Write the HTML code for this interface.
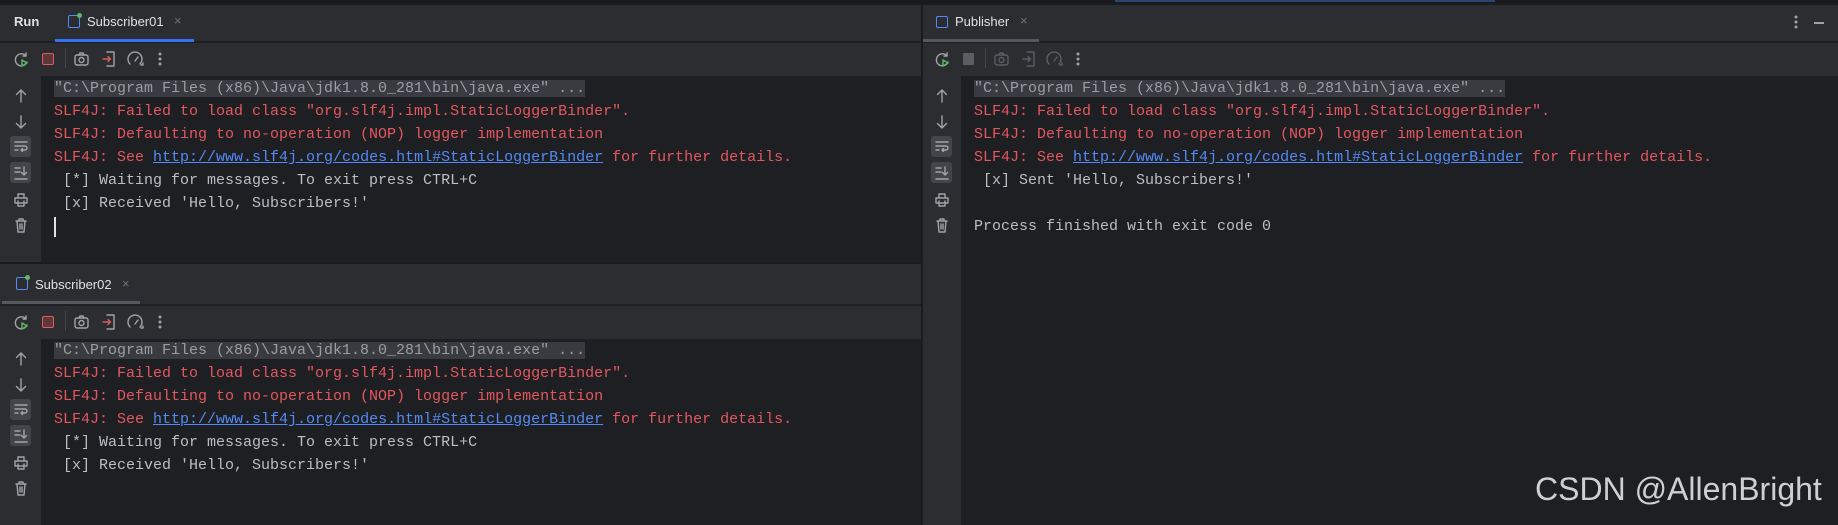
<!DOCTYPE html>
<html><head><meta charset="utf-8"><style>
*{margin:0;padding:0;box-sizing:border-box}
body{width:1838px;height:525px;background:#1e1f22;position:relative;overflow:hidden;font-family:"Liberation Sans",sans-serif}
.a{position:absolute}
.bar{background:#2b2d30}
.mono{font-family:"Liberation Mono",monospace;font-size:15px;white-space:pre;color:#bcbec4;position:absolute;line-height:23px}
.r{color:#e5575f}.l{color:#548af7;text-decoration:underline}.g{background:#393b40;color:#9a9da3}
.tab{position:absolute;font-size:13px;color:#dfe1e5}
svg{position:absolute;overflow:visible}
svg *{fill:none;stroke:#a0a3a8;stroke-width:1.4;stroke-linecap:round;stroke-linejoin:round}
svg.d *{stroke:#5a5d63}
</style></head><body>
<div class="a" style="left:0;top:0;width:1838px;height:5px;background:#1a1b1e"></div>
<div class="a" style="left:1115px;top:0;width:380px;height:2px;background:#2e436e"></div>

<!-- left top panel -->
<div class="a bar" style="left:0;top:5px;width:921px;height:36px"></div>
<div class="tab" style="left:14px;top:14px;font-weight:bold">Run</div>
<div class="a" style="left:68px;top:15px;width:12px;height:13px;border:1.5px solid #548af7;border-radius:2px"></div>
<div class="a" style="left:77px;top:13px;width:5px;height:5px;background:#5fb865;border-radius:50%"></div>
<div class="tab" style="left:87px;top:14px">Subscriber01</div>
<div class="tab" style="left:174px;top:13px;color:#6f737a">×</div>
<div class="a" style="left:55px;top:39px;width:139px;height:3px;background:#3574f0"></div>
<div class="a bar" style="left:0;top:43px;width:921px;height:33px"></div>
<div class="a bar" style="left:0;top:76px;width:41px;height:186px"></div>

<!-- toolbar template positions via SVG -->
<svg style="left:14px;top:52px" width="16" height="16"><path d="M12 4 A6 6 0 1 0 13 10"/><path d="M12 1 V4 H9"/><path d="M8 8 L13 11 L8 14Z" style="stroke:#5fb865"/></svg>
<div class="a" style="left:42px;top:53px;width:12px;height:12px;border:1.5px solid #db5c5c;background:#5e3838;border-radius:2px"></div>
<div class="a" style="left:65px;top:48px;width:1px;height:20px;background:#43454a"></div>
<svg style="left:74px;top:52px" width="16" height="14"><rect x="1" y="3" width="13" height="10" rx="2"/><circle cx="7.5" cy="8" r="2.5"/><path d="M5 3 L6 1 H9 L10 3"/></svg>
<svg style="left:102px;top:51px" width="14" height="16"><path d="M5 1 H12 V15 H5"/><path d="M1 8 H8 M6 5.5 L8.5 8 L6 10.5" style="stroke:#db5c5c"/></svg>
<svg style="left:127px;top:51px" width="18" height="16"><path d="M3 13 A7 7 0 1 1 13 13"/><path d="M8 10 L11 6"/><path d="M14 14 L16 14 L16 12" /></svg>
<svg style="left:158px;top:52px" width="4" height="14"><circle cx="2" cy="2" r=".8"/><circle cx="2" cy="7" r=".8"/><circle cx="2" cy="12" r=".8"/></svg>

<!-- gutter top -->
<svg style="left:15px;top:89px" width="12" height="14"><path d="M6 13 V1 M1.5 5.5 L6 1 L10.5 5.5"/></svg>
<svg style="left:15px;top:115px" width="12" height="14"><path d="M6 1 V13 M1.5 8.5 L6 13 L10.5 8.5"/></svg>
<div class="a" style="left:10px;top:136px;width:21px;height:21px;background:#43454a;border-radius:3px"></div>
<svg style="left:14px;top:140px" width="14" height="14"><path d="M1 2 H13 M1 6 H11 A2 2 0 0 1 11 10 H7 M8.5 8.5 L7 10 L8.5 11.5 M1 10 H4"/></svg>
<div class="a" style="left:10px;top:162px;width:21px;height:21px;background:#43454a;border-radius:3px"></div>
<svg style="left:14px;top:166px" width="14" height="14"><path d="M1 2 H6 M1 6 H6 M1 13 H13 M10 1 V9 M7.5 6.5 L10 9 L12.5 6.5"/></svg>
<svg style="left:14px;top:193px" width="14" height="14"><path d="M4 5 V1 H10 V5 M1 5 H13 V10 H1Z M4 8 V13 H10 V8"/></svg>
<svg style="left:15px;top:218px" width="12" height="15"><path d="M1 3 H11 M4 3 V1 H8 V3 M2 3 L3 14 H9 L10 3 M5 6 V11 M7 6 V11"/></svg>

<div class="mono" style="left:54px;top:77px"><span class="g">"C:\Program Files (x86)\Java\jdk1.8.0_281\bin\java.exe" ...</span>
<span class="r">SLF4J: Failed to load class "org.slf4j.impl.StaticLoggerBinder".</span>
<span class="r">SLF4J: Defaulting to no-operation (NOP) logger implementation</span>
<span class="r">SLF4J: See </span><span class="l">http://www.slf4j.org/codes.html#StaticLoggerBinder</span><span class="r"> for further details.</span>
 [*] Waiting for messages. To exit press CTRL+C
 [x] Received 'Hello, Subscribers!'</div>
<div class="a" style="left:54px;top:217px;width:2px;height:20px;background:#dfe1e5"></div>

<div class="a" style="left:0;top:262px;width:921px;height:2px;background:#1a1b1e"></div>

<!-- left bottom panel -->
<div class="a bar" style="left:0;top:264px;width:921px;height:40px"></div>
<div class="a" style="left:16px;top:277px;width:12px;height:13px;border:1.5px solid #548af7;border-radius:2px"></div>
<div class="a" style="left:25px;top:275px;width:5px;height:5px;background:#5fb865;border-radius:50%"></div>
<div class="tab" style="left:35px;top:277px">Subscriber02</div>
<div class="tab" style="left:122px;top:276px;color:#6f737a">×</div>
<div class="a" style="left:2px;top:301px;width:138px;height:3px;background:#55585e"></div>
<div class="a" style="left:0;top:304px;width:921px;height:1px;background:#1e1f22"></div>
<div class="a bar" style="left:0;top:306px;width:921px;height:33px"></div>
<div class="a bar" style="left:0;top:339px;width:41px;height:186px"></div>
<svg style="left:14px;top:315px" width="16" height="16"><path d="M12 4 A6 6 0 1 0 13 10"/><path d="M12 1 V4 H9"/><path d="M8 8 L13 11 L8 14Z" style="stroke:#5fb865"/></svg>
<div class="a" style="left:42px;top:316px;width:12px;height:12px;border:1.5px solid #db5c5c;background:#5e3838;border-radius:2px"></div>
<div class="a" style="left:65px;top:311px;width:1px;height:20px;background:#43454a"></div>
<svg style="left:74px;top:315px" width="16" height="14"><rect x="1" y="3" width="13" height="10" rx="2"/><circle cx="7.5" cy="8" r="2.5"/><path d="M5 3 L6 1 H9 L10 3"/></svg>
<svg style="left:102px;top:314px" width="14" height="16"><path d="M5 1 H12 V15 H5"/><path d="M1 8 H8 M6 5.5 L8.5 8 L6 10.5" style="stroke:#db5c5c"/></svg>
<svg style="left:127px;top:314px" width="18" height="16"><path d="M3 13 A7 7 0 1 1 13 13"/><path d="M8 10 L11 6"/><path d="M14 14 L16 14 L16 12"/></svg>
<svg style="left:158px;top:315px" width="4" height="14"><circle cx="2" cy="2" r=".8"/><circle cx="2" cy="7" r=".8"/><circle cx="2" cy="12" r=".8"/></svg>
<svg style="left:15px;top:352px" width="12" height="14"><path d="M6 13 V1 M1.5 5.5 L6 1 L10.5 5.5"/></svg>
<svg style="left:15px;top:378px" width="12" height="14"><path d="M6 1 V13 M1.5 8.5 L6 13 L10.5 8.5"/></svg>
<div class="a" style="left:10px;top:399px;width:21px;height:21px;background:#43454a;border-radius:3px"></div>
<svg style="left:14px;top:403px" width="14" height="14"><path d="M1 2 H13 M1 6 H11 A2 2 0 0 1 11 10 H7 M8.5 8.5 L7 10 L8.5 11.5 M1 10 H4"/></svg>
<div class="a" style="left:10px;top:425px;width:21px;height:21px;background:#43454a;border-radius:3px"></div>
<svg style="left:14px;top:429px" width="14" height="14"><path d="M1 2 H6 M1 6 H6 M1 13 H13 M10 1 V9 M7.5 6.5 L10 9 L12.5 6.5"/></svg>
<svg style="left:14px;top:456px" width="14" height="14"><path d="M4 5 V1 H10 V5 M1 5 H13 V10 H1Z M4 8 V13 H10 V8"/></svg>
<svg style="left:15px;top:481px" width="12" height="15"><path d="M1 3 H11 M4 3 V1 H8 V3 M2 3 L3 14 H9 L10 3 M5 6 V11 M7 6 V11"/></svg>
<div class="mono" style="left:54px;top:339px"><span class="g">"C:\Program Files (x86)\Java\jdk1.8.0_281\bin\java.exe" ...</span>
<span class="r">SLF4J: Failed to load class "org.slf4j.impl.StaticLoggerBinder".</span>
<span class="r">SLF4J: Defaulting to no-operation (NOP) logger implementation</span>
<span class="r">SLF4J: See </span><span class="l">http://www.slf4j.org/codes.html#StaticLoggerBinder</span><span class="r"> for further details.</span>
 [*] Waiting for messages. To exit press CTRL+C
 [x] Received 'Hello, Subscribers!'</div>

<div class="a" style="left:921px;top:5px;width:2px;height:520px;background:#1a1b1e"></div>

<!-- right panel -->
<div class="a bar" style="left:923px;top:5px;width:915px;height:36px"></div>
<div class="a" style="left:936px;top:16px;width:12px;height:12px;border:1.5px solid #548af7;border-radius:2px"></div>
<div class="tab" style="left:955px;top:14px">Publisher</div>
<div class="tab" style="left:1020px;top:13px;color:#6f737a">×</div>
<div class="a" style="left:923px;top:39px;width:116px;height:3px;background:#55585e"></div>
<svg style="left:1794px;top:15px" width="4" height="14"><circle cx="2" cy="2" r=".8"/><circle cx="2" cy="7" r=".8"/><circle cx="2" cy="12" r=".8"/></svg>
<div class="a" style="left:1814px;top:22px;width:10px;height:1.5px;background:#a0a3a8"></div>
<div class="a bar" style="left:923px;top:43px;width:915px;height:33px"></div>
<div class="a bar" style="left:923px;top:76px;width:38px;height:449px"></div>
<svg style="left:935px;top:52px" width="16" height="16"><path d="M12 4 A6 6 0 1 0 13 10"/><path d="M12 1 V4 H9"/><path d="M8 8 L13 11 L8 14Z" style="stroke:#5fb865"/></svg>
<div class="a" style="left:963px;top:53px;width:11px;height:12px;background:#5a5d63;border-radius:1px"></div>
<div class="a" style="left:985px;top:48px;width:1px;height:20px;background:#43454a"></div>
<svg class="d" style="left:994px;top:52px" width="16" height="14"><rect x="1" y="3" width="13" height="10" rx="2"/><circle cx="7.5" cy="8" r="2.5"/><path d="M5 3 L6 1 H9 L10 3"/></svg>
<svg class="d" style="left:1022px;top:51px" width="14" height="16"><path d="M5 1 H12 V15 H5"/><path d="M1 8 H8 M6 5.5 L8.5 8 L6 10.5"/></svg>
<svg class="d" style="left:1046px;top:51px" width="18" height="16"><path d="M3 13 A7 7 0 1 1 13 13"/><path d="M8 10 L11 6"/><path d="M14 14 L16 14 L16 12"/></svg>
<svg style="left:1076px;top:52px" width="4" height="14"><circle cx="2" cy="2" r=".8"/><circle cx="2" cy="7" r=".8"/><circle cx="2" cy="12" r=".8"/></svg>
<svg style="left:936px;top:89px" width="12" height="14"><path d="M6 13 V1 M1.5 5.5 L6 1 L10.5 5.5"/></svg>
<svg style="left:936px;top:115px" width="12" height="14"><path d="M6 1 V13 M1.5 8.5 L6 13 L10.5 8.5"/></svg>
<div class="a" style="left:931px;top:136px;width:21px;height:21px;background:#43454a;border-radius:3px"></div>
<svg style="left:935px;top:140px" width="14" height="14"><path d="M1 2 H13 M1 6 H11 A2 2 0 0 1 11 10 H7 M8.5 8.5 L7 10 L8.5 11.5 M1 10 H4"/></svg>
<div class="a" style="left:931px;top:162px;width:21px;height:21px;background:#43454a;border-radius:3px"></div>
<svg style="left:935px;top:166px" width="14" height="14"><path d="M1 2 H6 M1 6 H6 M1 13 H13 M10 1 V9 M7.5 6.5 L10 9 L12.5 6.5"/></svg>
<svg style="left:935px;top:193px" width="14" height="14"><path d="M4 5 V1 H10 V5 M1 5 H13 V10 H1Z M4 8 V13 H10 V8"/></svg>
<svg style="left:936px;top:218px" width="12" height="15"><path d="M1 3 H11 M4 3 V1 H8 V3 M2 3 L3 14 H9 L10 3 M5 6 V11 M7 6 V11"/></svg>
<div class="mono" style="left:974px;top:77px"><span class="g">"C:\Program Files (x86)\Java\jdk1.8.0_281\bin\java.exe" ...</span>
<span class="r">SLF4J: Failed to load class "org.slf4j.impl.StaticLoggerBinder".</span>
<span class="r">SLF4J: Defaulting to no-operation (NOP) logger implementation</span>
<span class="r">SLF4J: See </span><span class="l">http://www.slf4j.org/codes.html#StaticLoggerBinder</span><span class="r"> for further details.</span>
 [x] Sent 'Hello, Subscribers!'

Process finished with exit code 0</div>
<div class="a" style="left:1535px;top:471px;font-size:32px;color:#cfcfcf">CSDN @AllenBright</div>
</body></html>
